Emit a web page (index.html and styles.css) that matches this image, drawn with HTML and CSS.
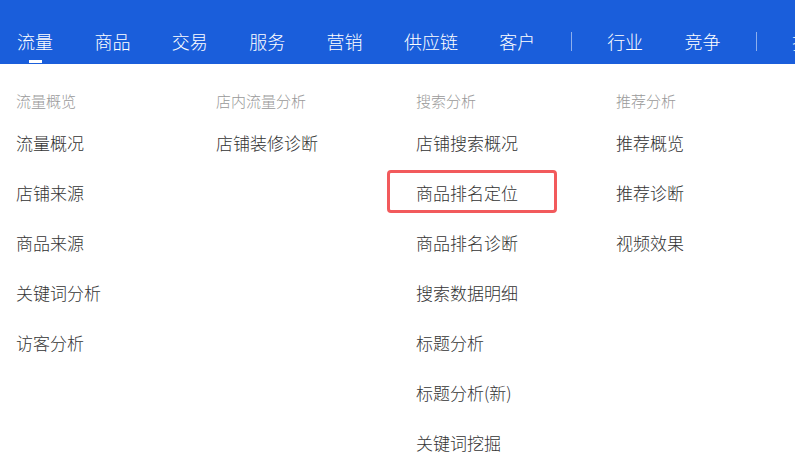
FILE: index.html
```html
<!DOCTYPE html>
<html lang="zh-CN">
<head>
<meta charset="utf-8">
<title>流量</title>
<link rel="stylesheet" href="styles.css">
</head>
<body>
<header class="topbar">
  <nav class="nav">
    <div class="nav-item active"><span class="nav-text">流量</span><i class="nav-bar"></i></div>
    <div class="nav-item"><span class="nav-text">商品</span></div>
    <div class="nav-item"><span class="nav-text">交易</span></div>
    <div class="nav-item"><span class="nav-text">服务</span></div>
    <div class="nav-item"><span class="nav-text">营销</span></div>
    <div class="nav-item"><span class="nav-text">供应链</span></div>
    <div class="nav-item"><span class="nav-text">客户</span></div>
    <div class="nav-sep"></div>
    <div class="nav-item"><span class="nav-text">行业</span></div>
    <div class="nav-item"><span class="nav-text">竞争</span></div>
    <div class="nav-sep"></div>
    <div class="nav-item"><span class="nav-text">推广</span></div>
  </nav>
</header>
<main class="menu">
  <section class="col">
    <h3 class="col-title">流量概览</h3>
    <ul class="col-list">
      <li>流量概况</li>
      <li>店铺来源</li>
      <li>商品来源</li>
      <li>关键词分析</li>
      <li>访客分析</li>
    </ul>
  </section>
  <section class="col">
    <h3 class="col-title">店内流量分析</h3>
    <ul class="col-list">
      <li>店铺装修诊断</li>
    </ul>
  </section>
  <section class="col">
    <h3 class="col-title">搜索分析</h3>
    <ul class="col-list">
      <li>店铺搜索概况</li>
      <li class="marked">商品排名定位</li>
      <li>商品排名诊断</li>
      <li>搜索数据明细</li>
      <li>标题分析</li>
      <li>标题分析(新)</li>
      <li>关键词挖掘</li>
    </ul>
  </section>
  <section class="col">
    <h3 class="col-title">推荐分析</h3>
    <ul class="col-list">
      <li>推荐概览</li>
      <li>推荐诊断</li>
      <li>视频效果</li>
    </ul>
  </section>
</main>
</body>
</html>
```

FILE: styles.css
```css
html, body {
  margin: 0;
  padding: 0;
  background: #ffffff;
  font-family: "Noto Sans CJK SC", "Noto Sans", sans-serif;
  width: 795px;
  height: 474px;
  overflow: hidden;
}

.topbar {
  height: 64px;
  background: #1a5edb;
  overflow: hidden;
}

.nav {
  display: flex;
  align-items: flex-start;
  gap: 41.4px;
  padding: 29px 0 0 17px;
  white-space: nowrap;
}

.nav-item {
  display: flex;
  flex-direction: column;
  align-items: center;
  flex-shrink: 0;
}

.nav-text {
  font-size: 18px;
  line-height: 24px;
  font-weight: 300;
  color: #ffffff;
}

.nav-bar {
  display: block;
  width: 13px;
  height: 3px;
  margin-top: 7px;
  background: #ffffff;
}

.nav-sep {
  flex-shrink: 0;
  width: 1px;
  height: 19px;
  margin: 3px -6px 0;
  background: rgba(255, 255, 255, 0.5);
}

.menu {
  display: flex;
  padding: 27px 0 0 16px;
}

.col {
  width: 200px;
  flex-shrink: 0;
}

.col-title {
  margin: 0;
  font-size: 15px;
  line-height: 20px;
  font-weight: 300;
  color: #999999;
}

.col-list {
  list-style: none;
  margin: 7px 0 0;
  padding: 0;
}

.col-list li {
  font-size: 17px;
  line-height: 50px;
  height: 50px;
  font-weight: 300;
  color: #333333;
  white-space: nowrap;
}

.col-list li.marked {
  position: relative;
}

.col-list li.marked::before {
  content: "";
  position: absolute;
  left: -29px;
  top: 2px;
  width: 164px;
  height: 37px;
  border: 3px solid #f25a5c;
  border-radius: 4px;
}
```
